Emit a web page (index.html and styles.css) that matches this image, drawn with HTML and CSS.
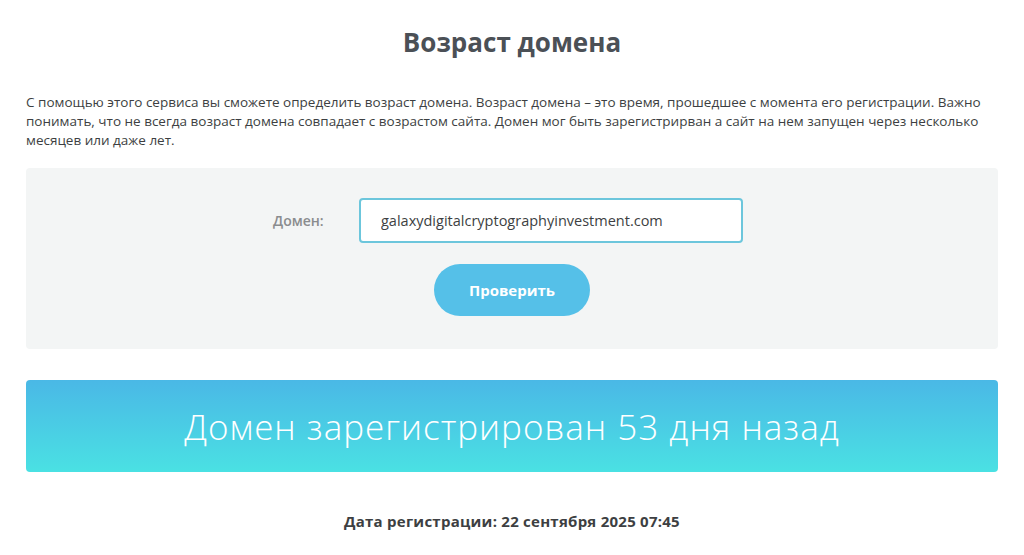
FILE: index.html
```html
<!DOCTYPE html>
<html lang="ru">
<head>
<meta charset="utf-8">
<title>Возраст домена</title>
<link rel="stylesheet" href="styles.css">
</head>
<body>
<main class="page">
  <h1 class="title">Возраст домена</h1>
  <p class="intro">С помощью этого сервиса вы сможете определить возраст домена. Возраст домена – это время, прошедшее с момента его регистрации. Важно понимать, что не всегда возраст домена совпадает с возрастом сайта. Домен мог быть зарегистрирван а сайт на нем запущен через несколько месяцев или даже лет.</p>
  <form class="check-box">
    <div class="field-row">
      <label class="field-label" for="domain">Домен:</label>
      <input class="field-input" id="domain" type="text" value="galaxydigitalcryptographyinvestment.com">
    </div>
    <button class="check-btn" type="button">Проверить</button>
  </form>
  <div class="result">Домен зарегистрирован 53 дня назад</div>
  <p class="reg-date">Дата регистрации: 22 сентября 2025 07:45</p>
</main>
</body>
</html>
```
FILE: styles.css
```css
* { box-sizing: border-box; }
html, body { margin: 0; padding: 0; background: #fff; }
body {
  font-family: "Open Sans", "DejaVu Sans", sans-serif;
  color: #3d3f42;
}
.page {
  padding: 0 26px;
  display: flex;
  flex-direction: column;
}
.title {
  margin: 26px 0 0;
  text-align: center;
  font-size: 26px;
  line-height: 32px;
  font-weight: 700;
  color: #4b5056;
}
.intro {
  margin: 35px 0 0;
  font-size: 13.5px;
  line-height: 19px;
  color: #3d3f42;
}
.check-box {
  margin: 18px 0 0;
  background: #f3f5f5;
  border-radius: 4px;
  height: 181px;
  padding-top: 30px;
  display: flex;
  flex-direction: column;
  align-items: center;
}
.field-row {
  display: flex;
  align-items: center;
  margin-right: 8px;
}
.field-label {
  width: 86px;
  font-size: 14px;
  font-weight: 600;
  color: #8a8c8e;
}
.field-input {
  width: 384px;
  height: 45px;
  border: 2px solid #6cc6dc;
  border-radius: 4px;
  background: #fff;
  padding: 0 20px;
  font-family: inherit;
  font-size: 14.5px;
  font-weight: 500;
  color: #3d3f42;
  outline: none;
}
.check-btn {
  margin-top: 21px;
  width: 156px;
  height: 52px;
  border: none;
  border-radius: 26px;
  background: #55c0e8;
  color: #fff;
  font-family: inherit;
  font-size: 15px;
  font-weight: 700;
}
.result {
  margin-top: 31px;
  height: 92px;
  border-radius: 4px;
  background: linear-gradient(180deg, #4ab8e6 0%, #4ae1e3 100%);
  color: #fff;
  font-size: 35px;
  letter-spacing: 1px;
  font-weight: 300;
  display: flex;
  align-items: center;
  justify-content: center;
}
.reg-date {
  margin: 39px 0 0;
  text-align: center;
  font-size: 15px;
  letter-spacing: 0.25px;
  font-weight: 700;
  color: #3d3f42;
}
```
